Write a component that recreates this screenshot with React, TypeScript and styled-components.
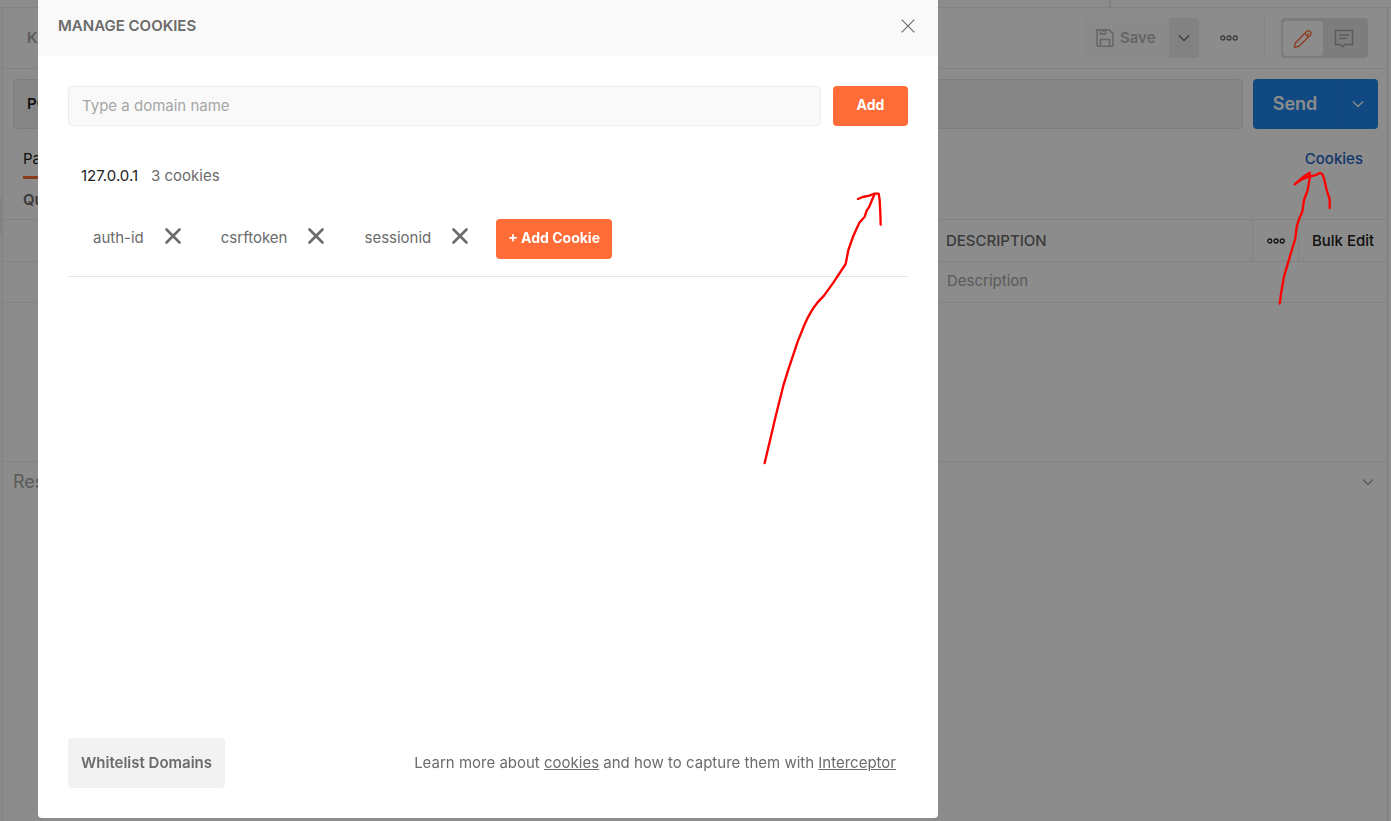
import React from "react";
import styled, { createGlobalStyle } from "styled-components";

const GlobalStyle = createGlobalStyle`
  *, *::before, *::after { box-sizing: border-box; }
  html, body { margin: 0; }
  body {
    font-family: Inter, "Liberation Sans", sans-serif;
    font-size: 15px;
    line-height: 20px;
    color: #6b6b6b;
    background: #fff;
    overflow: hidden;
  }
  button, input { font: inherit; }
  button { border: 0; padding: 0; cursor: pointer; background: none; color: inherit; }
  svg { display: block; flex: none; }
`;

const line = "#ededed";

/* ---------- workspace ---------- */

const Workspace = styled.div`
  display: flex;
  flex-direction: column;
  min-height: 100vh;
`;

const TabStrip = styled.div`
  display: flex;
  justify-content: flex-end;
  height: 8px;
  border-bottom: 1px solid ${line};
`;

const StripEnd = styled.div`
  width: 282px;
  border-left: 2px solid #e6e6e6;
`;

const Columns = styled.div`
  display: flex;
  flex: 1;
`;

const Gutter = styled.div`
  width: 3px;
  padding-top: 190px;
  background: #fcfcfc;
  border-right: 1px solid ${line};
`;

const Thumb = styled.div`
  height: 36px;
  background: #ededed;
`;

const Main = styled.main`
  flex: 1;
  display: flex;
  flex-direction: column;
  margin-right: 3px;
  border-right: 1px solid #e3e3e3;
`;

const TitleBar = styled.header`
  display: flex;
  align-items: center;
  justify-content: space-between;
  height: 61px;
  padding: 0 19px 0 24px;
  border-bottom: 1px solid ${line};
`;

const RequestName = styled.h1`
  margin: 0;
  font-size: 15px;
  font-weight: 600;
  color: #a6a6a6;
`;

const Tools = styled.div`
  display: flex;
  align-items: center;
`;

const SaveButton = styled.button`
  display: flex;
  align-items: center;
  gap: 5px;
  width: 86px;
  height: 40px;
  padding-left: 12px;
  border-radius: 4px 0 0 4px;
  background: #fbfbfb;
  color: #b9b9b9;
  font-weight: 600;
`;

const SaveMenu = styled.button`
  display: grid;
  place-items: center;
  width: 30px;
  height: 40px;
  border-radius: 0 4px 4px 0;
  background: #ededed;
  color: #6b6b6b;
`;

const DotsButton = styled.button`
  display: grid;
  place-items: center;
  width: 30px;
  height: 40px;
  margin: 0 20px 0 15px;
  color: #6b6b6b;
`;

const ViewToggle = styled.div`
  display: flex;
  height: 40px;
  padding: 3px 3px 2px 2px;
  margin-left: 16px;
  border-radius: 4px;
  background: #e3e3e3;
`;

const Rule = styled.div`
  width: 1px;
  height: 40px;
  background: ${line};
`;

const ViewButton = styled.button<{ $active?: boolean }>`
  display: grid;
  place-items: center;
  width: ${(p) => (p.$active ? 40 : 42)}px;
  border-radius: 4px;
  background: ${(p) => (p.$active ? "#fff" : "transparent")};
  color: ${(p) => (p.$active ? "#ff6c37" : "#a6a6a6")};
`;

const UrlRow = styled.div`
  display: flex;
  gap: 10px;
  padding: 10px 9px 10px 10px;
`;

const UrlBox = styled.div`
  display: flex;
  align-items: center;
  flex: 1;
  height: 50px;
  padding-left: 13px;
  border: 1px solid #e6e6e6;
  border-radius: 4px;
  background: #f2f2f2;
  color: #212121;
  font-weight: 600;
`;

const SendGroup = styled.div`
  display: flex;
  height: 50px;
  border-radius: 4px;
  overflow: hidden;
  background: #1f88ee;
  color: #fff;
`;

const SendButton = styled.button`
  width: 84px;
  font-size: 18px;
  font-weight: 600;
`;

const SendMenu = styled.button`
  display: grid;
  place-items: center;
  width: 41px;
  border-left: 1px solid #1c7edd;
`;

const TabRow = styled.nav`
  display: flex;
  align-items: center;
  justify-content: space-between;
  height: 40px;
  padding: 0 24px 0 20px;
`;

const Tab = styled.button`
  height: 40px;
  padding-top: 3px;
  border-bottom: 3px solid #ff6c37;
  color: #212121;
`;

const CookiesLink = styled.a`
  color: #2264c4;
  font-weight: 500;
  text-decoration: none;
`;

const SectionTitle = styled.h2`
  margin: 0;
  padding: 11px 20px 9px;
  font-size: 15px;
  line-height: 20px;
  font-weight: 600;
  color: #6b6b6b;
`;

const ParamTable = styled.table`
  width: 100%;
  table-layout: fixed;
  border-collapse: separate;
  border-spacing: 0;
  border-top: 1px solid ${line};

  th, td {
    padding: 0;
    border-bottom: 1px solid ${line};
    text-align: left;
  }
  th { height: 42px; font-weight: 500; }
  td { height: 41px; padding-bottom: 2px; color: #a6a6a6; font-weight: 400; }
`;

const HeadCell = styled.th<{ $ruled?: boolean }>`
  border-left: ${(p) => (p.$ruled ? `1px solid ${line}` : "0")};
`;

const CellText = styled.span`
  padding-left: 8px;
`;

const ValueText = styled.span`
  padding-left: 10px;
`;

const CellButton = styled.button`
  display: grid;
  place-items: center;
  width: 100%;
  color: #212121;
  font-weight: 500;
`;

const Filler = styled.div`
  height: 158px;
`;

const ResponseBar = styled.section`
  display: flex;
  align-items: center;
  justify-content: space-between;
  height: 41px;
  padding: 0 13px 0 10px;
  border-top: 1px solid ${line};
  color: #a6a6a6;
  font-size: 18px;
`;

/* ---------- dialog ---------- */

const Backdrop = styled.div`
  position: fixed;
  inset: 0;
  display: flex;
  padding: 0 38px 3px;
  background: rgba(0, 0, 0, 0.45);
`;

const Dialog = styled.div`
  position: relative;
  display: flex;
  flex-direction: column;
  width: 900px;
  max-width: 100%;
  border-radius: 0 0 4px 4px;
  background: #fff;
  overflow: hidden;
`;

const DialogHead = styled.header`
  display: flex;
  align-items: center;
  justify-content: space-between;
  height: 56px;
  padding: 0 20px 4px;
  background: #f9f9f9;
`;

const DialogTitle = styled.h2`
  margin: 0;
  font-size: 15px;
  font-weight: 600;
`;

const IconButton = styled.button`
  display: grid;
  place-items: center;
  height: 20px;
  min-width: 16px;
`;

const CloseButton = styled(IconButton)`
  width: 20px;
`;

const DialogBody = styled.div`
  flex: 1;
  padding: 30px 30px 0;
`;

const DomainForm = styled.form`
  display: flex;
  gap: 12px;
`;

const DomainInput = styled.input`
  flex: 1;
  min-width: 0;
  height: 40px;
  padding: 0 13px 2px;
  border: 1px solid ${line};
  border-radius: 4px;
  outline: 0;
  background: #f9f9f9;
  color: #212121;
  &::placeholder { color: #a6a6a6; opacity: 1; }
`;

const PrimaryButton = styled.button`
  height: 40px;
  min-width: 75px;
  padding: 0 12px 2px;
  border-radius: 4px;
  background: #ff6c37;
  color: #fff;
  font-size: 14px;
  font-weight: 700;
  white-space: nowrap;
`;

const Domain = styled.section`
  margin-top: 40px;
  padding-bottom: 17px;
  border-bottom: 1px solid #e6e6e6;
`;

const DomainHead = styled.div`
  display: flex;
  gap: 13px;
  padding-left: 13px;
`;

const DomainName = styled.span`
  color: #212121;
`;

const CookieList = styled.div`
  display: flex;
  align-items: center;
  gap: 16px;
  margin-top: 33px;
  padding-left: 13px;
`;

const Cookie = styled.div`
  display: flex;
  gap: 21px;
  padding: 0 12px 2px;
`;

const RemoveButton = styled(IconButton)`
  height: 16px;
`;

const DialogFoot = styled.footer`
  display: flex;
  align-items: center;
  justify-content: space-between;
  padding: 0 42px 30px 30px;
`;

const SecondaryButton = styled.button`
  height: 50px;
  padding: 0 13px;
  border-radius: 4px;
  background: #f2f2f2;
  font-weight: 600;
`;

const FootNote = styled.p`
  margin: 0;
  a { color: inherit; text-decoration: underline; }
`;

const PenStroke = styled.svg`
  position: absolute;
  fill: none;
  stroke: #f00;
  stroke-width: 7;
  stroke-linecap: round;
  stroke-linejoin: round;
  pointer-events: none;
`;

const DialogArrow = styled(PenStroke)`
  left: 712px;
  top: 180px;
`;

const LinkArrow = styled(PenStroke)`
  right: 41px;
  top: 160px;
`;

/* ---------- icons ---------- */

const Chevron = () => (
  <svg width="12" height="8" viewBox="0 0 12 8" fill="none" stroke="currentColor" strokeWidth="1.3">
    <path d="M1 1.5l5 5 5-5" />
  </svg>
);

const Dots = () => (
  <svg width="18" height="6" viewBox="0 0 18 6" fill="none" stroke="currentColor" strokeWidth="1.3">
    <circle cx="2.8" cy="3" r="2" />
    <circle cx="9" cy="3" r="2" />
    <circle cx="15.2" cy="3" r="2" />
  </svg>
);

const SaveIcon = () => (
  <svg width="20" height="20" viewBox="0 0 20 20" fill="none" stroke="currentColor" strokeWidth="1.5">
    <path d="M2 1.7h12l4 4v11.6a1 1 0 0 1-1 1H3a1 1 0 0 1-1-1z" />
    <path d="M5.5 1.7V6h5V1.7M8.5 2v2M5.5 18v-6.500h9V18" />
  </svg>
);

const PencilIcon = () => (
  <svg width="20" height="20" viewBox="0 0 20 20" fill="none" stroke="currentColor" strokeWidth="1.3" strokeLinejoin="round">
    <path d="M1.500 18.300l.8-4.300L13.800 2.300a2.100 2.100 0 0 1 3 0l.7.7a2.100 2.100 0 0 1 0 3L5.900 17.300z" />
    <path d="M11.800 4.400l3.700 3.700M14.300 6.200l1.600-1.600" />
  </svg>
);

const CommentIcon = () => (
  <svg width="20" height="20" viewBox="0 0 20 20" fill="none" stroke="currentColor" strokeWidth="1.4">
    <path d="M1.500 1.500h17v14H11l-2.500 2.300L6 15.500H1.500z" />
    <path d="M5 6h10M5 9.500h7.500" />
  </svg>
);

const CloseIcon = () => (
  <svg width="14" height="14" viewBox="0 0 14 14" fill="none" stroke="currentColor" strokeWidth="1.2">
    <path d="M.7.7l12.600 12.600M13.300.7L.7 13.300" />
  </svg>
);

const RemoveIcon = () => (
  <svg width="16" height="16" viewBox="0 0 16 16" fill="none" stroke="currentColor" strokeWidth="2.6" strokeLinecap="round">
    <path d="M1.500 1.500l13 13M14.500 1.500l-13 13" />
  </svg>
);

const cookies = ["auth-id", "csrftoken", "sessionid"];

export default function App() {
  return (
    <>
      <GlobalStyle />
      <Workspace>
        <TabStrip>
          <StripEnd />
        </TabStrip>
        <Columns>
          <Gutter>
            <Thumb />
          </Gutter>
          <Main>
            <TitleBar>
              <RequestName>K</RequestName>
              <Tools>
                <SaveButton>
                  <SaveIcon />
                  Save
                </SaveButton>
                <SaveMenu aria-label="Save options">
                  <Chevron />
                </SaveMenu>
                <DotsButton aria-label="More actions">
                  <Dots />
                </DotsButton>
                <Rule />
                <ViewToggle>
                  <ViewButton $active aria-label="Edit">
                    <PencilIcon />
                  </ViewButton>
                  <ViewButton aria-label="Comments">
                    <CommentIcon />
                  </ViewButton>
                </ViewToggle>
              </Tools>
            </TitleBar>
            <UrlRow>
              <UrlBox>POST</UrlBox>
              <SendGroup>
                <SendButton>Send</SendButton>
                <SendMenu aria-label="Send options">
                  <Chevron />
                </SendMenu>
              </SendGroup>
            </UrlRow>
            <TabRow>
              <Tab>Params</Tab>
              <CookiesLink href="#cookies">Cookies</CookiesLink>
            </TabRow>
            <SectionTitle>Query Params</SectionTitle>
            <ParamTable>
              <colgroup>
                <col />
                <col width="315" />
                <col width="46" />
                <col width="89" />
              </colgroup>
              <thead>
                <tr>
                  <HeadCell />
                  <HeadCell $ruled>
                    <CellText>DESCRIPTION</CellText>
                  </HeadCell>
                  <HeadCell $ruled>
                    <CellButton aria-label="Column options">
                      <Dots />
                    </CellButton>
                  </HeadCell>
                  <HeadCell $ruled>
                    <CellButton>Bulk Edit</CellButton>
                  </HeadCell>
                </tr>
              </thead>
              <tbody>
                <tr>
                  <td />
                  <td colSpan={3}>
                    <ValueText>Description</ValueText>
                  </td>
                </tr>
              </tbody>
            </ParamTable>
            <Filler />
            <ResponseBar>
              Response
              <Chevron />
            </ResponseBar>
          </Main>
        </Columns>
      </Workspace>

      <Backdrop>
        <Dialog role="dialog" aria-labelledby="dialog-title">
          <DialogHead>
            <DialogTitle id="dialog-title">MANAGE COOKIES</DialogTitle>
            <CloseButton aria-label="Close">
              <CloseIcon />
            </CloseButton>
          </DialogHead>
          <DialogBody>
            <DomainForm onSubmit={(e) => e.preventDefault()}>
              <DomainInput aria-label="Domain name" placeholder="Type a domain name" />
              <PrimaryButton type="submit">Add</PrimaryButton>
            </DomainForm>
            <Domain>
              <DomainHead>
                <DomainName>127.0.0.1</DomainName>
                <span>3 cookies</span>
              </DomainHead>
              <CookieList>
                {cookies.map((name) => (
                  <Cookie key={name}>
                    <span>{name}</span>
                    <RemoveButton aria-label={`Remove ${name}`}>
                      <RemoveIcon />
                    </RemoveButton>
                  </Cookie>
                ))}
                <PrimaryButton>+ Add Cookie</PrimaryButton>
              </CookieList>
            </Domain>
          </DialogBody>
          <DialogFoot>
            <SecondaryButton>Whitelist Domains</SecondaryButton>
            <FootNote>
              Learn more about <a href="#cookies-help">cookies</a> and how to capture them with{" "}
              <a href="#interceptor">Interceptor</a>
            </FootNote>
          </DialogFoot>
          <DialogArrow width="150" height="300" viewBox="0 0 450 900">
            <path d="M44 849L78 705L100 617L113 575L143 485L163 435Q180 395 202 368L222 347L250 308L287 252L295 210L310 168L328 128L344 110L350 92L358 80L366 60L373 44" />
            <path d="M324 57L338 51L358 47L374 41L386 41L389 60L391 100L392 134" />
          </DialogArrow>
        </Dialog>
        <LinkArrow width="80" height="150" viewBox="0 0 240 450">
          <path d="M29 431L34 395L42 350L58 295L76 235L80 200L88 175L97 155L102 120L113 90L120 50L119 38L98 52L74 73L92 60L115 50L135 46L150 39L157 42L162 55L170 90L179 118L179 144" />
        </LinkArrow>
      </Backdrop>
    </>
  );
}
